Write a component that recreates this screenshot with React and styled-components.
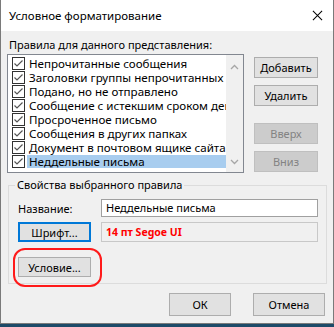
import React from 'react';
import styled, { createGlobalStyle } from 'styled-components';

const GlobalStyle = createGlobalStyle`
  html, body {
    margin: 0;
    padding: 0;
    background: #1d4a68;
  }
  body {
    font-family: "Noto Sans", "Liberation Sans", sans-serif;
    font-size: 11px;
    color: #000;
  }
`;

const rules = [
  'Непрочитанные сообщения',
  'Заголовки группы непрочитанных',
  'Подано, но не отправлено',
  'Сообщение с истекшим сроком действия',
  'Просроченное письмо',
  'Сообщения в других папках',
  'Документ в почтовом ящике сайта организации',
  'Неддельные письма',
];

const App = () => {
  return (
    <>
      <GlobalStyle />
      <Window>
        <TitleBar>
          <Title>Условное форматирование</Title>
          <CloseIcon viewBox="0 0 12 12">
            <path d="M1 1 L11 11 M11 1 L1 11" stroke="#000" strokeWidth="1.1" fill="none" />
          </CloseIcon>
        </TitleBar>
        <Body>
          <TopSection>
            <RulesColumn>
              <Label>Правила для данного представления:</Label>
              <ListBox>
                <Items>
                  {rules.map((r, i) => (
                    <Item key={i}>
                      <CheckBox viewBox="0 0 13 13">
                        <rect x="0.5" y="0.5" width="12" height="12" fill="#fff" stroke="#333" />
                        <path d="M2.5 6.5 L5 9 L10.5 3.5" stroke="#555" strokeWidth="1.2" fill="none" />
                      </CheckBox>
                      <ItemText selected={i === rules.length - 1}>{r}</ItemText>
                    </Item>
                  ))}
                </Items>
                <ScrollBar>
                  <Arrow viewBox="0 0 9 6">
                    <path d="M1 5 L4.5 1.5 L8 5" stroke="#a6a6a6" strokeWidth="1.3" fill="none" />
                  </Arrow>
                  <Arrow viewBox="0 0 9 6">
                    <path d="M1 1 L4.5 4.5 L8 1" stroke="#a6a6a6" strokeWidth="1.3" fill="none" />
                  </Arrow>
                </ScrollBar>
              </ListBox>
            </RulesColumn>
            <SideButtons>
              <Button>Добавить</Button>
              <Button>Удалить</Button>
              <Spacer />
              <Button disabled>Вверх</Button>
              <Button disabled>Вниз</Button>
            </SideButtons>
          </TopSection>

          <Group>
            <Legend>Свойства выбранного правила</Legend>
            <FieldRow>
              <FieldLabel>Название:</FieldLabel>
              <TextInput>Неддельные письма</TextInput>
            </FieldRow>
            <FieldRow gap={4}>
              <SmallButton focused>Шрифт...</SmallButton>
              <FontBox>14 пт Segoe UI</FontBox>
            </FieldRow>
            <FieldRow gap={15}>
              <SmallButton>Условие...</SmallButton>
              <Highlight />
            </FieldRow>
          </Group>

          <Footer>
            <FooterButton width={62}>ОК</FooterButton>
            <FooterButton width={72}>Отмена</FooterButton>
          </Footer>
        </Body>
      </Window>
    </>
  );
};

const Window = styled.div`
  width: 332px;
  height: 323px;
  border: 1px solid #7a7a7a;
  border-top: none;
  background: #f0f0f0;
  display: flex;
  flex-direction: column;
`;

const TitleBar = styled.div`
  height: 31px;
  flex: none;
  background: #fff;
  display: flex;
  align-items: center;
  justify-content: space-between;
  padding: 0 10px 0 8px;
`;

const Title = styled.div`
  font-size: 11.5px;
`;

const CloseIcon = styled.svg`
  width: 11px;
  height: 11px;
`;

const Body = styled.div`
  flex: 1;
  display: flex;
  flex-direction: column;
  padding: 6px 0 0 6px;
`;

const TopSection = styled.div`
  display: flex;
`;

const RulesColumn = styled.div`
  display: flex;
  flex-direction: column;
  width: 237px;
`;

const Label = styled.div`
  height: 17px;
  line-height: 15px;
  padding-left: 2px;
`;

const ListBox = styled.div`
  height: 117px;
  border: 1px solid #828790;
  background: #fff;
  display: flex;
`;

const Items = styled.div`
  flex: 1;
  padding: 1px 0 0 4px;
  overflow: hidden;
`;

const Item = styled.div`
  height: 14px;
  display: flex;
  align-items: center;
  white-space: nowrap;
`;

const CheckBox = styled.svg`
  width: 13px;
  height: 13px;
  flex: none;
`;

const ItemText = styled.span`
  font-size: 11.6px;
  margin-left: 2px;
  padding: 0 2px;
  height: 13px;
  line-height: 13px;
  flex: ${p => (p.selected ? 1 : 'none')};
  background: ${p => (p.selected ? '#a8cdef' : 'transparent')};
`;

const ScrollBar = styled.div`
  width: 17px;
  flex: none;
  background: #f0f0f0;
  display: flex;
  flex-direction: column;
  justify-content: space-between;
  align-items: center;
  padding: 9px 0 7px;
`;

const Arrow = styled.svg`
  width: 9px;
  height: 6px;
`;

const SideButtons = styled.div`
  display: flex;
  flex-direction: column;
  gap: 7px;
  margin: 20px 0 0 10px;
`;

const Spacer = styled.div`
  height: 3px;
`;

const Button = styled.button`
  width: 64px;
  height: 21px;
  padding: 0;
  font: inherit;
  border: 1px solid ${p => (p.disabled ? '#bfbfbf' : '#adadad')};
  background: ${p => (p.disabled ? '#cccccc' : '#e1e1e1')};
  color: ${p => (p.disabled ? '#838383' : '#000')};
`;

const Group = styled.div`
  margin: 12px 0 0 1px;
  width: 319px;
  box-sizing: border-box;
  border: 1px solid #dcdcdc;
  padding: 0 8px 6px 9px;
  display: flex;
  flex-direction: column;
`;

const Legend = styled.div`
  align-self: flex-start;
  margin: -8px 0 0 -3px;
  padding: 0 2px;
  height: 14px;
  line-height: 14px;
  background: #f0f0f0;
`;

const FieldRow = styled.div`
  position: relative;
  display: flex;
  align-items: center;
  justify-content: space-between;
  height: 20px;
  margin-top: ${p => p.gap ?? 6}px;
`;

const FieldLabel = styled.div`
  padding-left: 0;
`;

const TextInput = styled.div`
  width: 217px;
  height: 18px;
  box-sizing: border-box;
  border: 1px solid #a0a0a0;
  background: #fff;
  padding-left: 4px;
  line-height: 16px;
`;

const SmallButton = styled.button`
  width: 73px;
  height: 20px;
  padding: 0;
  font: inherit;
  color: #000;
  background: #e1e1e1;
  border: ${p => (p.focused ? '2px solid #0078d7' : '1px solid #adadad')};
`;

const FontBox = styled.div`
  width: 217px;
  height: 20px;
  box-sizing: border-box;
  border: 1px solid #c8c8c8;
  padding-left: 4px;
  line-height: 18px;
  color: #ff0000;
  font-weight: bold;
  font-size: 10.5px;
`;

const Highlight = styled.div`
  position: absolute;
  left: -5px;
  top: -9px;
  width: 85px;
  height: 35px;
  border: 2px solid #ff1a1a;
  border-radius: 12px;
`;

const Footer = styled.div`
  display: flex;
  justify-content: flex-end;
  gap: 22px;
  padding: 9px 8px 0 0;
`;

const FooterButton = styled.button`
  width: ${p => p.width}px;
  height: 23px;
  padding: 0;
  font: inherit;
  color: #000;
  background: #e1e1e1;
  border: 1px solid #adadad;
`;

export default App;
